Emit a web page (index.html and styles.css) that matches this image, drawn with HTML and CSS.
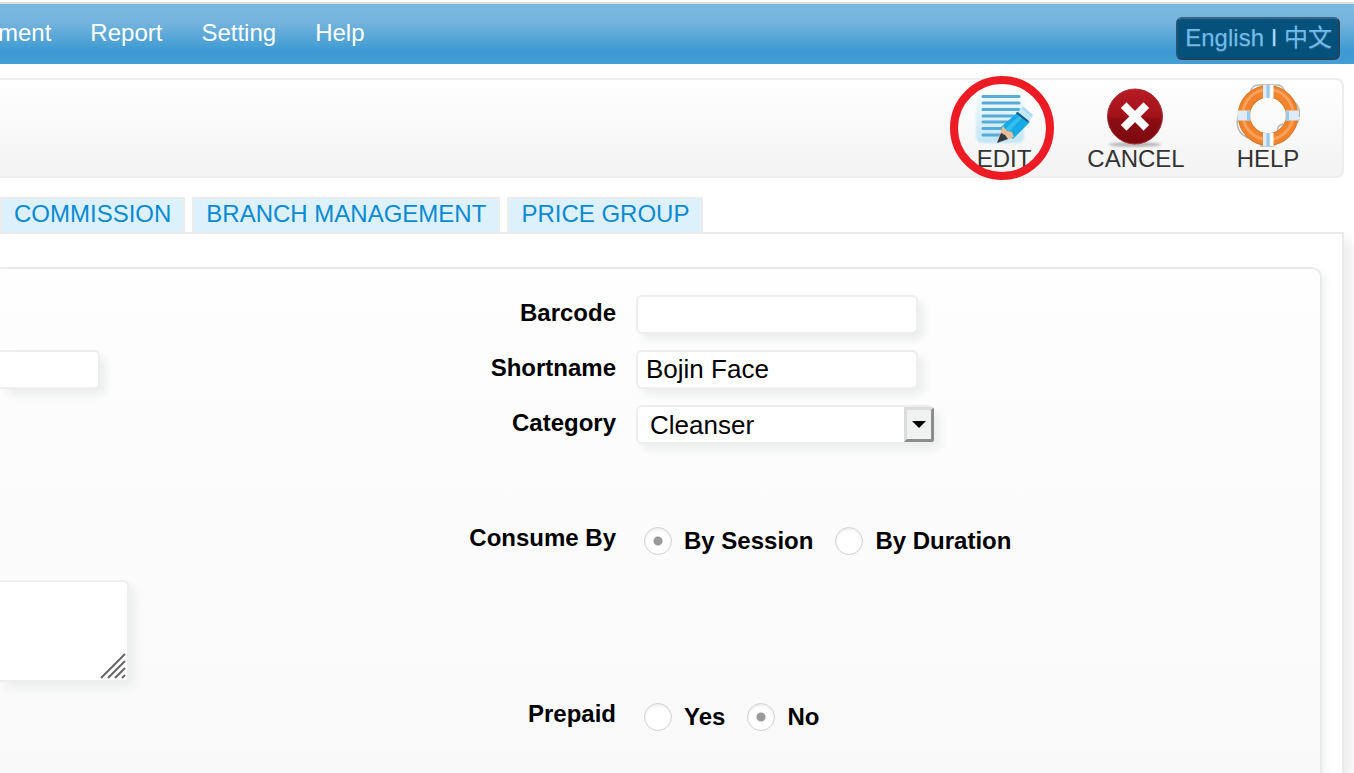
FILE: index.html
```html
<!DOCTYPE html>
<html lang="en">
<head>
<meta charset="utf-8">
<title>Service Management</title>
<link rel="stylesheet" href="styles.css">
</head>
<body>
<header class="topbar">
  <nav class="menu">
    <a href="#">ment</a>
    <a href="#">Report</a>
    <a href="#">Setting</a>
    <a href="#">Help</a>
  </nav>
  <div class="language"><a href="#">English</a> <span>I</span> <a href="#">中文</a></div>
</header>

<div class="toolbar">
  <button type="button" class="tool tool-marked">
    <svg viewBox="0 0 64 64" aria-hidden="true">
      <defs>
        <linearGradient id="paper" x1="0" y1="0" x2="0" y2="1">
          <stop offset="0" stop-color="#f4fbff"/><stop offset="1" stop-color="#c2e4f7"/>
        </linearGradient>
        <filter id="soft"><feGaussianBlur stdDeviation="1"/></filter>
      </defs>
      <rect x="4" y="10" width="48" height="49" rx="6" fill="url(#paper)" filter="url(#soft)"/>
      <g stroke="#56abd8" stroke-width="3" stroke-linecap="round">
        <path d="M11 12.500H47M11 19H47M11 25.500H47M11 32H42M11 38H36M11 44.500H30M11 51H28"/>
      </g>
      <path d="M46 28L51 22L61 31L57 38Z" fill="#c3e8fa"/>
      <path d="M51 24L60 32" stroke="#a9d9f1" stroke-width="2"/>
      <path d="M29 43L46 28L58 38L41 55Z" fill="#16a9e4"/>
      <path d="M33 45L48 31L51 33L36 49Z" fill="#35bbee"/>
      <path d="M44.500 28.500L56 37.500" stroke="#25587a" stroke-width="2"/>
      <path d="M31 42L25 58L42 53L40 48L35 47Z" fill="#e9bd98"/>
      <path d="M29 49L25 59L36 55L33 51Z" fill="#333c45"/>
    </svg>
    <span>EDIT</span>
  </button>
  <button type="button" class="tool">
    <svg viewBox="0 0 64 64" aria-hidden="true">
      <defs>
        <linearGradient id="red" x1="0" y1="0" x2="0" y2="1">
          <stop offset="0" stop-color="#b91b24"/><stop offset=".5" stop-color="#a2121a"/>
          <stop offset=".56" stop-color="#8a0d13"/><stop offset="1" stop-color="#7d0a10"/>
        </linearGradient>
      </defs>
      <ellipse cx="31" cy="60.500" rx="26" ry="2.500" fill="#b9b9b9" filter="url(#soft)"/>
      <circle cx="31" cy="32.500" r="27.500" fill="url(#red)" stroke="#a3333a"/>
      <path d="M22.500 24L39.500 41M39.500 24L22.500 41" stroke="#fff" stroke-width="8" stroke-linecap="square" stroke-linejoin="round"/>
    </svg>
    <span>CANCEL</span>
  </button>
  <button type="button" class="tool">
    <svg viewBox="0 0 64 64" aria-hidden="true">
      <g fill="none">
        <path d="M14 9Q16 1 22 1H43Q47 2 49 8M58 18Q65 23 63 33M2 32Q-1 44 7 51L12 54M47 40Q40 42 42 49Q45 58 37 62H24M63 35Q61 43 50 43" stroke="#b9b5b1" stroke-width="1.500"/>
        <circle cx="32" cy="31.500" r="24" stroke="#d07628" stroke-width="12.500"/>
        <circle cx="32" cy="31.500" r="24" stroke="#f0832b" stroke-width="11"/>
        <circle cx="32" cy="30.500" r="25" stroke="#f9a05a" stroke-width="3"/>
        <g stroke="#dcebf7" stroke-width="13">
          <path d="M27 7.500H37M27 55.500H37M8 26.500V36.500M56 26.500V36.500" />
        </g>
        <path d="M32 1V14M32 49V62M12.500 27V37M51.500 27V37" stroke="#9ac8ea" stroke-width="3"/>
        <path d="M36 1V14M36 49V62" stroke="#fff" stroke-width="3"/>
      </g>
    </svg>
    <span>HELP</span>
  </button>
</div>

<nav class="tabs">
  <a href="#">COMMISSION</a>
  <a href="#">BRANCH MANAGEMENT</a>
  <a href="#">PRICE GROUP</a>
</nav>

<main class="panel">
  <form class="card">
    <div class="side">
      <input class="box side-input" type="text" aria-label="Name">
      <div class="side-notes">
        <textarea class="box" aria-label="Description"></textarea>
        <svg class="grip" viewBox="0 0 26 26" aria-hidden="true">
          <path d="M1 25L25 1M8 25L25 8M15 25L25 15M22 25L25 22" stroke="#666" stroke-width="2"/>
        </svg>
      </div>
    </div>
    <div class="fields">
      <div class="row">
        <label class="caption" for="barcode">Barcode</label>
        <div class="value"><input class="box" id="barcode" type="text"></div>
      </div>
      <div class="row">
        <label class="caption" for="shortname">Shortname</label>
        <div class="value"><input class="box" id="shortname" type="text" value="Bojin Face"></div>
      </div>
      <div class="row">
        <label class="caption" for="category">Category</label>
        <div class="value">
          <div class="dropdown">
            <select class="box" id="category"><option>Cleanser</option></select>
            <span class="arrow"></span>
          </div>
        </div>
      </div>
      <div class="row row-consume" role="radiogroup" aria-labelledby="consume">
        <span class="caption" id="consume">Consume By</span>
        <div class="value choices">
          <label><input type="radio" name="consume" checked>By Session</label>
          <label><input type="radio" name="consume">By Duration</label>
        </div>
      </div>
      <div class="row row-prepaid" role="radiogroup" aria-labelledby="prepaid">
        <span class="caption" id="prepaid">Prepaid</span>
        <div class="value choices">
          <label><input type="radio" name="prepaid">Yes</label>
          <label><input type="radio" name="prepaid" checked>No</label>
        </div>
      </div>
    </div>
  </form>
</main>
</body>
</html>
```

FILE: styles.css
```css
*,
*::before,
*::after {
  box-sizing: border-box;
}

body {
  margin: 0;
  min-height: 100vh;
  display: flex;
  flex-direction: column;
  overflow: hidden;
  background: #fff;
  color: #000;
  font: 24px/28px "Liberation Sans", "Noto Sans CJK SC", sans-serif;
}

a {
  text-decoration: none;
}

.topbar {
  display: flex;
  justify-content: space-between;
  align-items: flex-start;
  height: 62px;
  margin-top: 2px;
  padding-right: 14px;
  border-top: 2px solid #dedede;
  background: linear-gradient(#7bbae0, #74b4dc 30%, #3c99d2 80%, #439fd5);
}

.menu {
  display: flex;
  gap: 39px;
  margin-left: -2px;
  padding-top: 15px;
}

.menu a {
  color: #fff;
}

.language {
  margin-top: 13px;
  padding: 5px 6px 6px 7px;
  border: 2px solid #235273;
  border-top-color: #38668a;
  border-right-color: #25415b;
  border-bottom-color: #25415b;
  border-radius: 6px;
  background: #04527c;
  color: #a5d8f5;
  text-shadow: 0 1px 1px #3c6a94;
}

.language a {
  color: #6fbdec;
}

.toolbar {
  display: flex;
  justify-content: flex-end;
  margin: 14px 10px 0 0;
  padding: 4px 8px 3px 0;
  border: 2px solid #ededed;
  border-left: 0;
  border-radius: 0 8px 8px 0;
  background: linear-gradient(#fff, #f3f3f3);
}

.tool {
  position: relative;
  display: flex;
  flex-direction: column;
  align-items: center;
  width: 132px;
  padding: 0;
  border: 0;
  background: none;
  color: #333;
  font: inherit;
}

.tool svg {
  width: 64px;
  height: 64px;
}

.tool span {
  margin-top: -3px;
}

.tool-marked::after {
  content: "";
  position: absolute;
  top: -8px;
  left: 12px;
  width: 104px;
  height: 104px;
  border: 8px solid #ed1c24;
  border-radius: 50%;
}

.tabs {
  display: flex;
  gap: 7px;
  margin-top: 19px;
}

.tabs a {
  padding: 1px 12px 4px;
  border: 2px solid #ececec;
  border-bottom: 0;
  background: #dcf1fc;
  color: #0a8ad2;
}

.panel {
  flex: 1;
  display: flex;
  margin-right: 10px;
  padding: 33px 20px 0 0;
  border: 2px solid #ebebeb;
  border-width: 2px 2px 0 0;
  box-shadow: 8px 8px 10px #eee;
}

.card {
  flex: 1;
  display: grid;
  grid-template-columns: 4fr 11fr;
  padding-top: 26px;
  border: 2px solid #e9ebeb;
  border-width: 2px 2px 0 0;
  border-top-right-radius: 10px;
  background: linear-gradient(#fefefe, #f9f9f9);
  box-shadow: 4px 4px 10px #f1f3f3;
}

.box {
  display: block;
  width: 282px;
  height: 39px;
  padding: 0 8px;
  border: 2px solid #eee;
  border-radius: 6px;
  background: #fff;
  box-shadow: 6px 6px 8px #eceeee;
  color: #000;
  font: 26px "Liberation Sans", sans-serif;
}

.side-input {
  width: 100px;
  margin-top: 55px;
  border-left: 0;
  border-radius: 0 6px 6px 0;
}

.side-notes {
  position: relative;
  width: 129px;
  margin-top: 191px;
}

.side-notes .box {
  width: 100%;
  height: 102px;
  border-left: 0;
  border-radius: 0 6px 6px 0;
  resize: none;
}

.grip {
  position: absolute;
  right: 3px;
  bottom: 3px;
  width: 26px;
  height: 26px;
}

.row {
  display: grid;
  grid-template-columns: 3fr 8fr;
  align-items: start;
  height: 39px;
  margin-bottom: 16px;
}

.row-consume {
  margin-top: 76px;
}

.row-prepaid {
  margin-top: 137px;
}

.caption {
  padding-top: 4px;
  font-weight: bold;
  text-align: right;
}

.value {
  padding-left: 20px;
}

.dropdown {
  position: relative;
  width: 298px;
}

.dropdown .box {
  width: 100%;
  padding-left: 12px;
  appearance: none;
}

.arrow {
  position: absolute;
  top: 2px;
  right: 0;
  width: 30px;
  height: 35px;
  border: 3px solid #dcdcdc;
  border-right-color: #8c8c8c;
  border-bottom-color: #8c8c8c;
  border-radius: 0 3px 3px 0;
  background: #f0f2f2;
  pointer-events: none;
}

.arrow::after {
  content: "";
  position: absolute;
  top: 11px;
  left: 5px;
  border: 7px solid transparent;
  border-top-color: #000;
  border-bottom: 0;
}

.choices {
  display: flex;
  gap: 22px;
  padding: 7px 0 0 28px;
  font-weight: bold;
}

.choices label {
  display: flex;
  align-items: center;
  gap: 12px;
}

.choices input {
  width: 28px;
  height: 28px;
  margin: 0;
  border: 1px solid #d2d2d2;
  border-radius: 50%;
  background: #fff;
  box-shadow: inset 0 2px 3px #eee;
  appearance: none;
}

.choices input:checked {
  background: radial-gradient(circle, #999 4px, #fff 5px);
}
```
